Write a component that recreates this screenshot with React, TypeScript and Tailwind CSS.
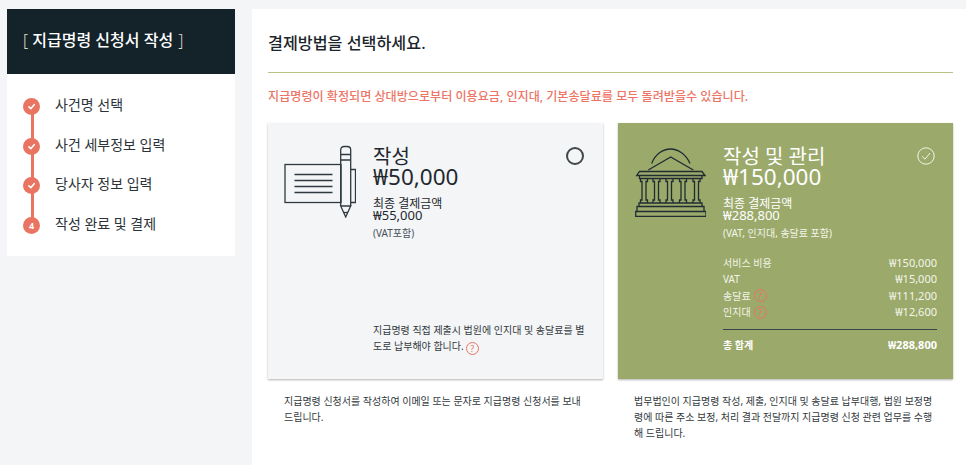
const font = "font-['Noto_Sans','Noto_Sans_CJK_KR',sans-serif]";

function Step({ n, label, last }: { n?: string; label: string; last?: boolean }) {
  return (
    <li className="relative flex h-[39.5px] items-start">
      {!last && <span className="absolute left-[9px] top-[12px] h-[40px] w-[3px] bg-[#e87461]" />}
      <span className="relative flex h-[17px] w-[17px] translate-x-[1px] translate-y-[3px] items-center justify-center rounded-full bg-[#e87461] text-[9px] font-bold leading-none text-white">
        {n ?? (
          <svg width="9" height="9" viewBox="0 0 10 10" fill="none" stroke="white" strokeWidth="1.8" strokeLinecap="round" strokeLinejoin="round">
            <path d="M2 5.3 4.2 7.4 8 3" />
          </svg>
        )}
      </span>
      <span className="ml-[16px] text-[14px] leading-[20px] text-[#2c3338]">{label}</span>
    </li>
  );
}

function Q({ className }: { className?: string }) {
  return (
    <span className={`inline-flex h-[13px] w-[13px] items-center justify-center rounded-full border border-[#e87461] text-[9px] leading-none text-[#e87461] ${className ?? ""}`}>?</span>
  );
}

function CheckIcon() {
  return (
    <svg viewBox="0 0 72 74" fill="none" stroke="#2f3a40" strokeWidth="1.3" className="h-[74px] w-[72px] shrink-0 -translate-y-[1px]">
      <rect x="1" y="20.5" width="56" height="38" />
      <path d="M66.5 25.5h5v33h-5" />
      <path d="M10.5 30.5h38M10.5 36.5h38M10.5 42.5h38M10.5 48.5h38" />
      <path d="M56.7 62V6q0-3.5 3.5-3.5h3q3.5 0 3.5 3.5v56" />
      <path d="M56.7 10.5h10M56.7 16h10M56.7 62h10l-5 11z" />
      <path d="M59.5 68.5h4.5" />
    </svg>
  );
}

function BankIcon() {
  return (
    <svg viewBox="0 0 72 72" fill="none" stroke="#1f2d33" strokeWidth="1.3" className="h-[72px] w-[72px] shrink-0">
      <path d="M17.7 18.5C21 9 29 4 36.5 4S52 9 56 18.5" />
      <path d="M14.3 25 36.7 12 59.3 25" />
      <path d="M5.5 26.5h62.5l3 4H2.7z" />
      <path d="M5.5 30.5v3h62.5v-3" />
      <path d="M6.5 33.5v3h1.5V55H6.5v3M13.5 33.5v3H12V55h1.5v3" />
      <path d="M19 33.5v3h1.5V55H19v3M26 33.5v3h-1.5V55H26v3" />
      <path d="M32 33.5v3h1.5V55H32v3M39 33.5v3h-1.5V55H39v3" />
      <path d="M45.5 33.5v3H47V55h-1.5v3M52.5 33.5v3H51V55h1.5v3" />
      <path d="M59 33.5v3h1.5V55H59v3M66 33.5v3h-1.5V55H66v3" />
      <path d="M5 58h63v3.5H5zM3 61.5h67v5H3zM1.7 66.5H72V71.5H1.7z" />
    </svg>
  );
}

function Row({ label, value, q }: { label: string; value: string; q?: boolean }) {
  return (
    <div className="flex h-[16.33px] items-center justify-between text-[10px] leading-[16px] text-[#f3f5e9]">
      <span className="flex items-center gap-[3px]">{label}{q && <Q />}</span>
      <span className="text-[11px]">{value}</span>
    </div>
  );
}

export default function App() {
  return (
    <div className={`${font} flex h-[465px] w-[966px] gap-[17px] overflow-hidden bg-[#f4f5f7] pl-[7px] pt-[9px]`}>
      <aside className="h-[247px] w-[228px] shrink-0 bg-white">
        <div className="flex h-[65px] items-center bg-[#14222a] pl-[16px] pb-[4px] text-[16px] font-medium text-white">
          <span className="font-light text-[#d9d9c0]">[</span>&nbsp;지급명령 신청서 작성&nbsp;<span className="ml-[1px] font-light text-[#d9d9c0]">]</span>
        </div>
        <ol className="pl-[15px] pt-[21px]">
          <Step label="사건명 선택" />
          <Step label="사건 세부정보 입력" />
          <Step label="당사자 정보 입력" />
          <Step n="4" label="작성 완료 및 결제" last />
        </ol>
      </aside>

      <main className="flex-1 bg-white pl-[16px] pr-[13px]">
        <h1 className="flex h-[63px] items-center pt-[6px] text-[16.2px] font-medium text-[#1c252b]">결제방법을 선택하세요.</h1>
        <div className="h-[1px] bg-[#b9c283]" />
        <p className="mt-[14px] text-[12.1px] font-medium leading-[20px] text-[#ec7566]">지급명령이 확정되면 상대방으로부터 이용요금, 인지대, 기본송달료를 모두 돌려받을수 있습니다.</p>

        <div className="mt-[16px] grid grid-cols-2 gap-[15px]">
          <div>
            <section className="relative flex h-[256px] gap-[17px] bg-[#f4f5f7] pl-[16px] pt-[22px] shadow-[0_1px_2px_rgba(0,0,0,0.3)]">
              <CheckIcon />
              <div className="w-[214px] pt-[1px] text-[#1f292f]">
                <h2 className="text-[20px] leading-[21px]">작성</h2>
                <p className="text-[22.5px] leading-[19px]">₩50,000</p>
                <p className="mt-[12px] text-[12px] leading-[11px]">최종 결제금액</p>
                <p className="text-[13px] leading-[13px]">₩55,000</p>
                <p className="mt-[4px] text-[10px] leading-[14px] text-[#4a5257]">(VAT포함)</p>
                <p className="mt-[82px] text-[10px] leading-[16px] text-[#33393d]">지급명령 직접 제출시 법원에 인지대 및 송달료를 별도로 납부해야 합니다.<Q className="ml-[2px] align-[-2px]" /></p>
              </div>
              <span className="absolute right-[19px] top-[24px] h-[18px] w-[18px] rounded-full border-2 border-[#41484c]" />
            </section>
            <p className="mt-[14px] px-[16px] text-[10px] leading-[16px] text-[#33393d]">지급명령 신청서를 작성하여 이메일 또는 문자로 지급명령 신청서를 보내드립니다.</p>
          </div>

          <div>
            <section className="relative flex h-[256px] gap-[17px] bg-[#9ba96b] pl-[16px] pr-[16px] pt-[22px] text-white shadow-[0_1px_2px_rgba(0,0,0,0.3)]">
              <BankIcon />
              <div className="w-[214px] pt-[1px]">
                <h2 className="text-[20px] leading-[21px]">작성 및 관리</h2>
                <p className="text-[22.5px] leading-[19px]">₩150,000</p>
                <p className="mt-[12px] text-[12px] leading-[11px]">최종 결제금액</p>
                <p className="text-[13px] leading-[13px]">₩288,800</p>
                <p className="mt-[4px] text-[10px] leading-[14px] text-[#f3f5e9]">(VAT, 인지대, 송달료 포함)</p>
                <div className="mt-[15px] border-b border-[#3a444a] pb-[9px]">
                  <Row label="서비스 비용" value="₩150,000" />
                  <Row label="VAT" value="₩15,000" />
                  <Row label="송달료" value="₩111,200" q />
                  <Row label="인지대" value="₩12,600" q />
                </div>
                <div className="mt-[7px] flex justify-between text-[10px] font-bold leading-[16px]">
                  <span>총 합계</span><span className="text-[11px]">₩288,800</span>
                </div>
              </div>
              <svg viewBox="0 0 18 18" fill="none" stroke="#f3f5e9" className="absolute right-[18px] top-[24px] h-[18px] w-[18px]">
                <circle cx="9" cy="9" r="8.2" />
                <path d="M5 9.3 8 12.2 13 6" />
              </svg>
            </section>
            <p className="mt-[14px] px-[16px] text-[10px] leading-[16px] text-[#33393d]">법무법인이 지급명령 작성, 제출, 인지대 및 송달료 납부대행, 법원 보정명령에 따른 주소 보정, 처리 결과 전달까지 지급명령 신청 관련 업무를 수행해 드립니다.</p>
          </div>
        </div>
      </main>
    </div>
  );
}
